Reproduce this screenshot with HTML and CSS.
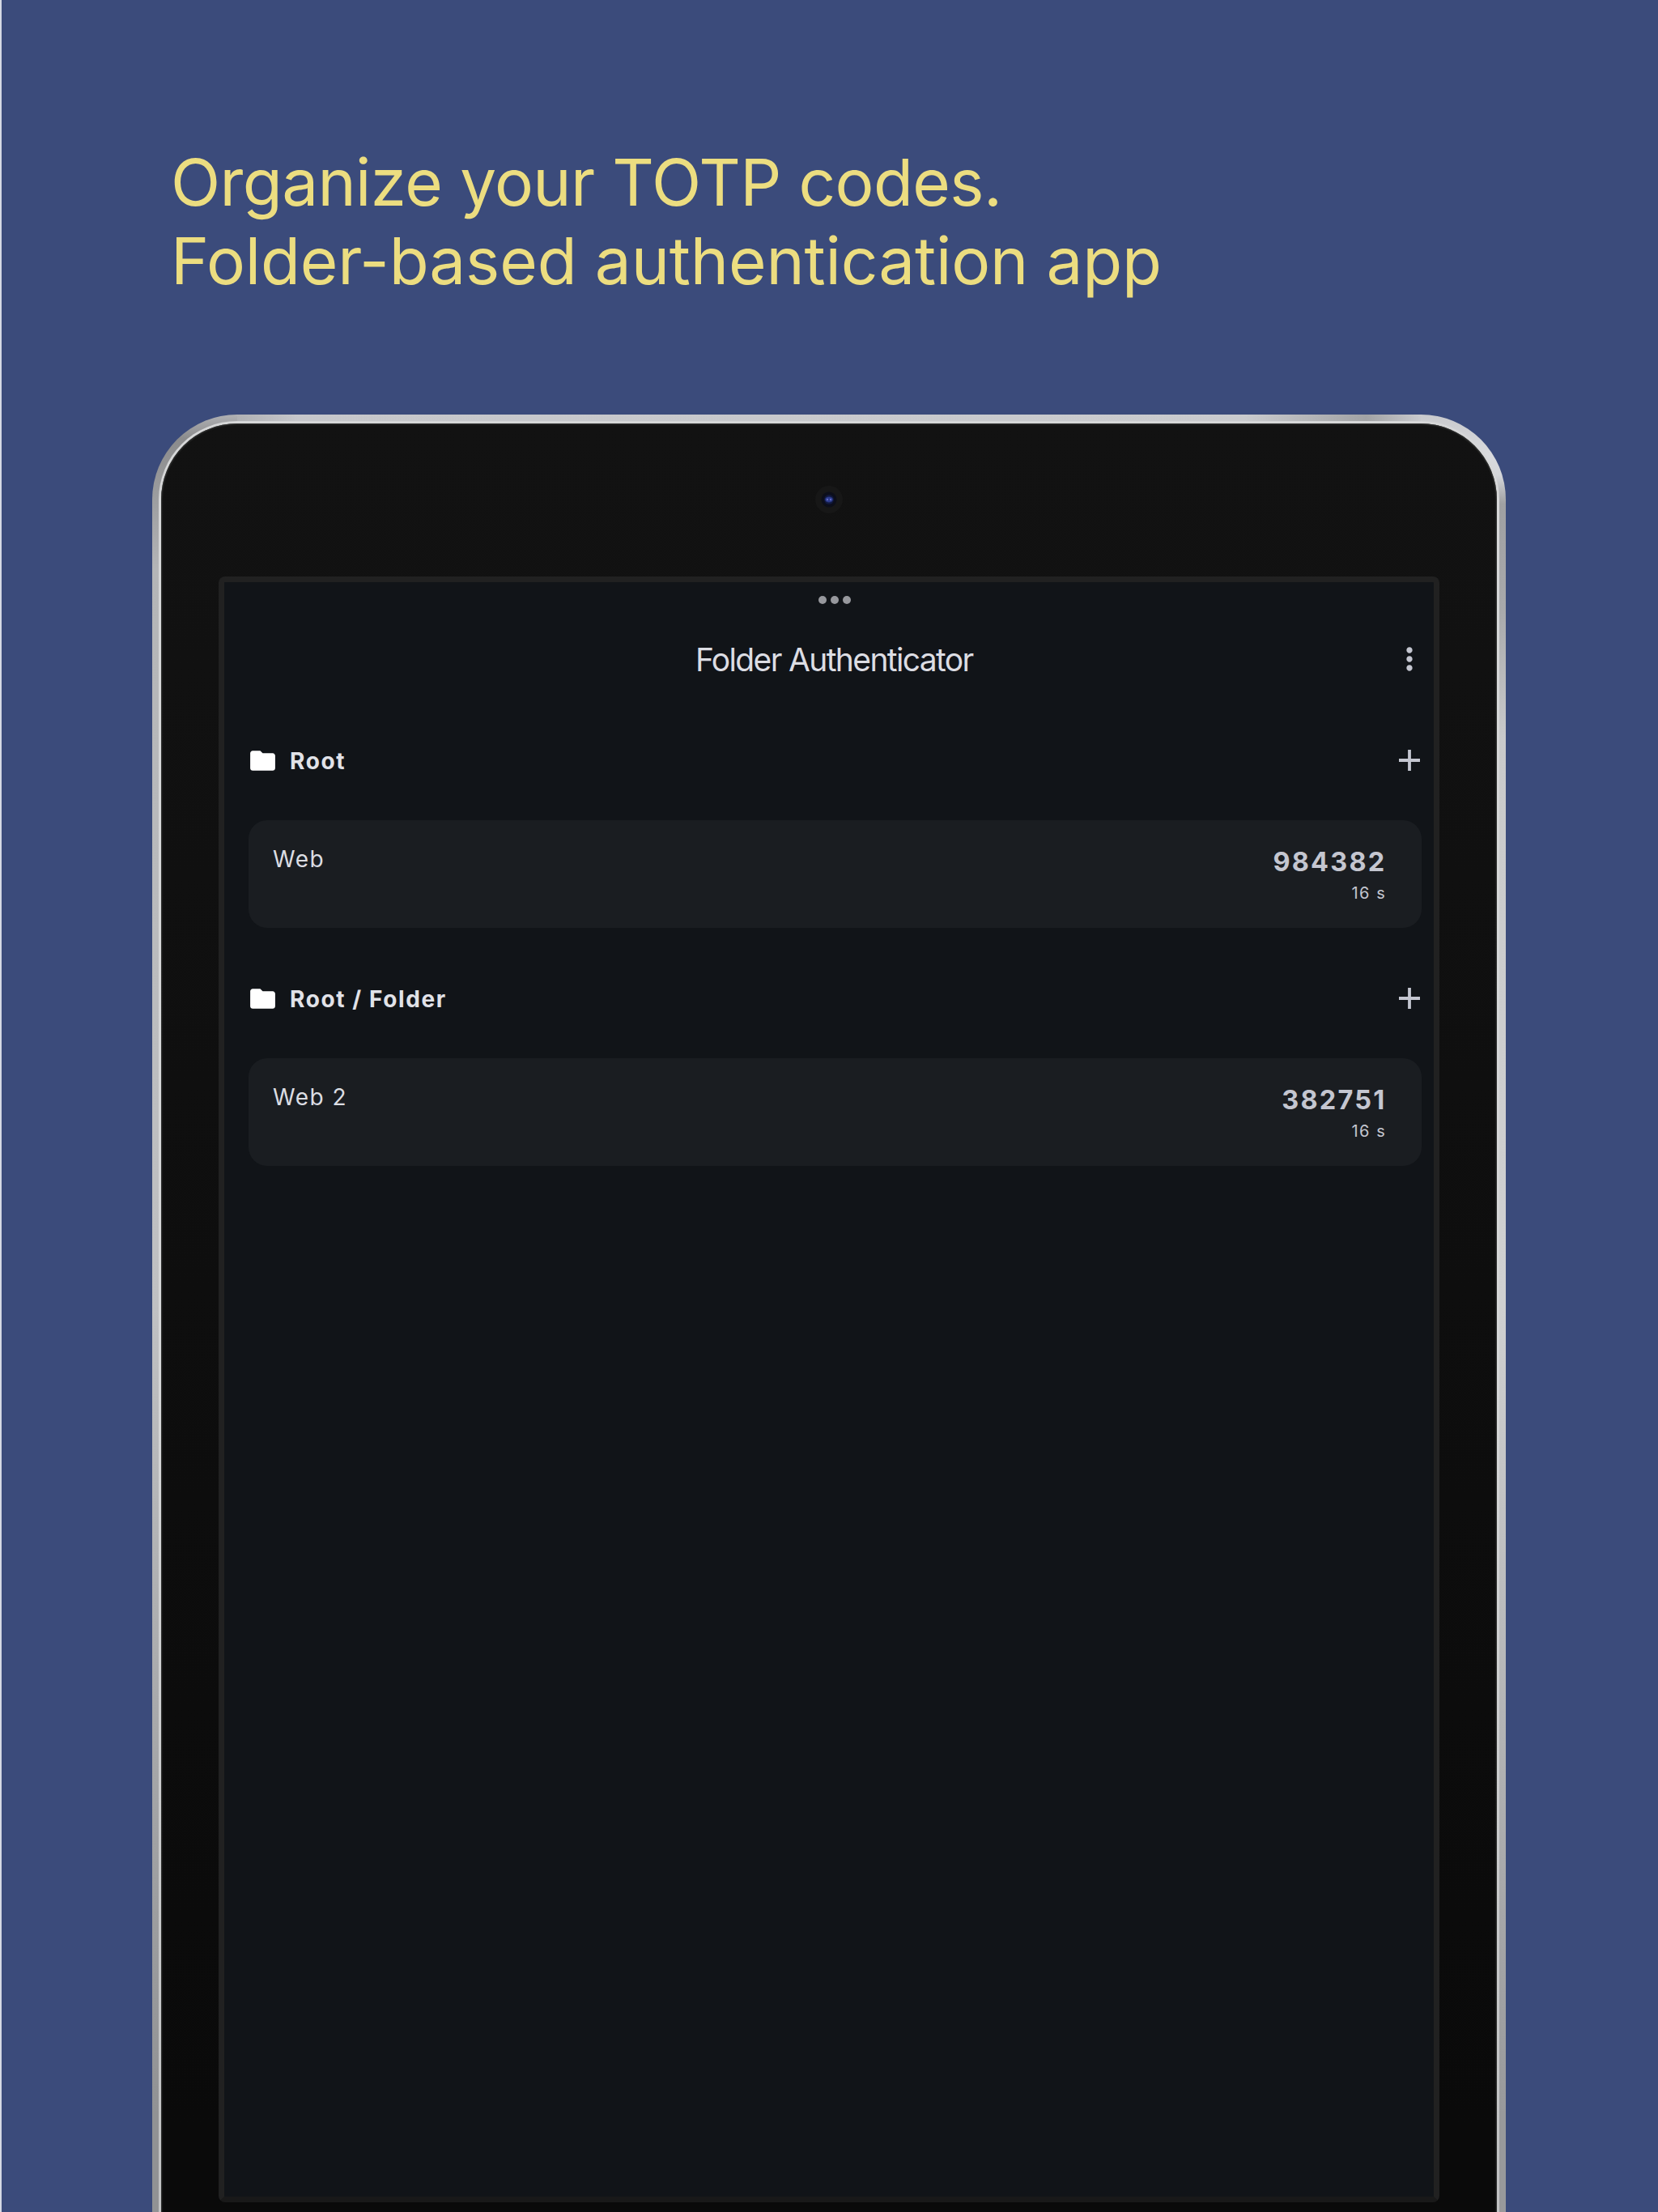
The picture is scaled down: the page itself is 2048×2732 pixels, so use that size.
FILE: index.html
```
<!DOCTYPE html>
<html lang="en">
<head>
<meta charset="utf-8">
<title>Folder Authenticator</title>
<link rel="stylesheet" href="styles.css">
</head>
<body>
<main class="promo">
  <h1 class="headline"><span class="headline-line headline-first">Organize your TOTP codes.</span><span class="headline-line">Folder-based authentication app</span></h1>
  <div class="device">
    <div class="rim">
      <div class="bezel">
        <div class="camera-row">
          <svg class="camera" viewBox="0 0 36 36">
            <circle cx="18" cy="18" r="17" fill="#171717"/>
            <circle cx="18" cy="18" r="9.5" fill="#0c0e1a"/>
            <circle cx="18" cy="18" r="6" fill="#11183c"/>
            <ellipse cx="18" cy="18" rx="4.8" ry="3.4" fill="#2c3a8c"/>
            <circle cx="16" cy="18" r="1.2" fill="#5f6cc4"/>
            <circle cx="20" cy="18" r="1.2" fill="#5f6cc4"/>
          </svg>
        </div>
        <div class="screen">
          <div class="multitask"><i></i><i></i><i></i></div>
          <header class="app-bar">
            <span class="app-title">Folder Authenticator</span>
            <svg class="icon menu" viewBox="0 0 24 24"><path d="M12 8c1.1 0 2-.9 2-2s-.9-2-2-2-2 .9-2 2 .9 2 2 2zm0 2c-1.1 0-2 .9-2 2s.9 2 2 2 2-.9 2-2-.9-2-2-2zm0 6c-1.1 0-2 .9-2 2s.9 2 2 2 2-.9 2-2-.9-2-2-2z"/></svg>
          </header>
          <section class="group">
            <div class="group-head">
              <svg class="icon folder" viewBox="0 0 24 24"><path d="M10 4H4c-1.1 0-1.99.9-1.99 2L2 18c0 1.1.9 2 2 2h16c1.1 0 2-.9 2-2V8c0-1.1-.9-2-2-2h-8l-2-2z"/></svg>
              <h2 class="group-name">Root</h2>
              <svg class="icon add" viewBox="0 0 26 26"><path d="M11.1 0h3.8v11.1h11.1v3.8H14.9v11.1h-3.8V14.9H0v-3.8h11.1z"/></svg>
            </div>
            <article class="card">
              <span class="account">Web</span>
              <div class="token"><span class="code">984382</span><span class="timer">16 s</span></div>
            </article>
          </section>
          <section class="group">
            <div class="group-head">
              <svg class="icon folder" viewBox="0 0 24 24"><path d="M10 4H4c-1.1 0-1.99.9-1.99 2L2 18c0 1.1.9 2 2 2h16c1.1 0 2-.9 2-2V8c0-1.1-.9-2-2-2h-8l-2-2z"/></svg>
              <h2 class="group-name">Root / Folder</h2>
              <svg class="icon add" viewBox="0 0 26 26"><path d="M11.1 0h3.8v11.1h11.1v3.8H14.9v11.1h-3.8V14.9H0v-3.8h11.1z"/></svg>
            </div>
            <article class="card">
              <span class="account">Web 2</span>
              <div class="token"><span class="code">382751</span><span class="timer">16 s</span></div>
            </article>
          </section>
        </div>
      </div>
    </div>
  </div>
</main>
</body>
</html>
```
FILE: styles.css
```
* { box-sizing: border-box; }

body {
  margin: 0;
  background: #3b4b7b;
  font-family: Inter, "Liberation Sans", sans-serif;
}

.promo {
  display: flex;
  flex-direction: column;
  height: 2732px;
  overflow: hidden;
  padding: 177px 188.5px 0 186px;
  border-left: 2px solid #d5d9e4;
}

.headline {
  margin: 0 0 142px 23px;
  color: #ecdd80;
  font-size: 80px;
  font-weight: 400;
  line-height: 96.5px;
  white-space: nowrap;
}
.headline-line { display: block; letter-spacing: -0.15px; }
.headline-first { letter-spacing: -0.62px; }

/* Tablet: metal edge, bright rim, black bezel, screen */
.device {
  height: 2400px;
  flex: none;
  padding: 8px 8px 0;
  border-radius: 105px 105px 0 0;
  background:
    linear-gradient(#b0b1b4, #8b8b8c 30px, #999a9c 90px, #b4b5b7 190px, #c0c1c3 1100px, #919294 2100px) left / 105px 100% no-repeat,
    linear-gradient(#c9cacd, #d9dadd 50px, #d4d6da 75px, #9fa0a2 110px, #a8a9ab 240px, #c9cacb 400px, #cfd0d1 1100px, #98999b 2100px) right / 105px 100% no-repeat,
    linear-gradient(90deg, #b0b1b4 105px, #c6c7cb 180px, #cacbce 1350px, #a2a3a5 1500px, #c9cacd 1567px);
}
.rim {
  height: 100%;
  padding: 3px 3px 0;
  border-radius: 97px 97px 0 0;
  background: linear-gradient(#d6d7d8 1200px, #c2c3c4 2150px);
}
.bezel {
  height: 100%;
  padding: 189px 71px 0;
  border-radius: 94px 94px 0 0;
  background: linear-gradient(#121212, #111 300px, #0a0a0a 2100px);
  box-shadow: inset 0 0 2px 1px #3a3b3a;
}
.camera-row {
  display: flex;
  justify-content: center;
  margin: -113px 0 77px;
}
.camera { width: 36px; height: 36px; }

.screen {
  height: 2008px;
  border: 7px solid #212121;
  border-bottom-color: #191919;
  border-radius: 8px;
  background: #111418;
  padding: 0 14.5px 0 29.5px;
}
.multitask {
  display: flex;
  justify-content: center;
  align-items: center;
  gap: 5px;
  height: 43.5px;
}
.multitask i {
  width: 10px;
  height: 10px;
  border-radius: 50%;
  background: #97989d;
}
.app-bar {
  display: grid;
  grid-template-columns: 1fr auto 1fr;
  align-items: center;
  height: 103px;
}
.app-title {
  grid-column: 2;
  color: #dcdde3;
  font-size: 39px;
  letter-spacing: -1.64px;
  padding: 1px 2px 0 0;
  white-space: nowrap;
}
.icon { display: block; fill: #c4c6d0; }
.menu { width: 44px; height: 44px; justify-self: end; margin-right: -7px; }

.group { margin-bottom: 14.4px; }
.group-head {
  display: flex;
  align-items: center;
  height: 147px;
}
.folder { width: 37px; height: 37px; margin-left: -1px; fill: #fff; }
.group-name {
  margin: 0 auto 0 15.5px;
  padding-top: 1px;
  color: #e1e2e8;
  font-size: 28px;
  font-weight: 700;
  letter-spacing: 1.6px;
}
.add { width: 26px; height: 26px; margin-right: 2px; }

.card {
  display: flex;
  justify-content: space-between;
  height: 133px;
  padding: 28px 43.5px 0 30.5px;
  border-radius: 23px;
  background: #1a1d21;
}
.account {
  color: #dcdde3;
  font-size: 28px;
  line-height: 40px;
  letter-spacing: 1.5px;
}
.token {
  display: flex;
  flex-direction: column;
  align-items: flex-end;
  color: #c4c6d0;
  padding-top: 3px;
}
.code {
  font-size: 32.5px;
  font-weight: 700;
  line-height: 42px;
  letter-spacing: 2.2px;
}
.timer {
  margin-top: 2.5px;
  font-size: 20px;
  line-height: 30px;
  letter-spacing: 1.6px;
}
```
